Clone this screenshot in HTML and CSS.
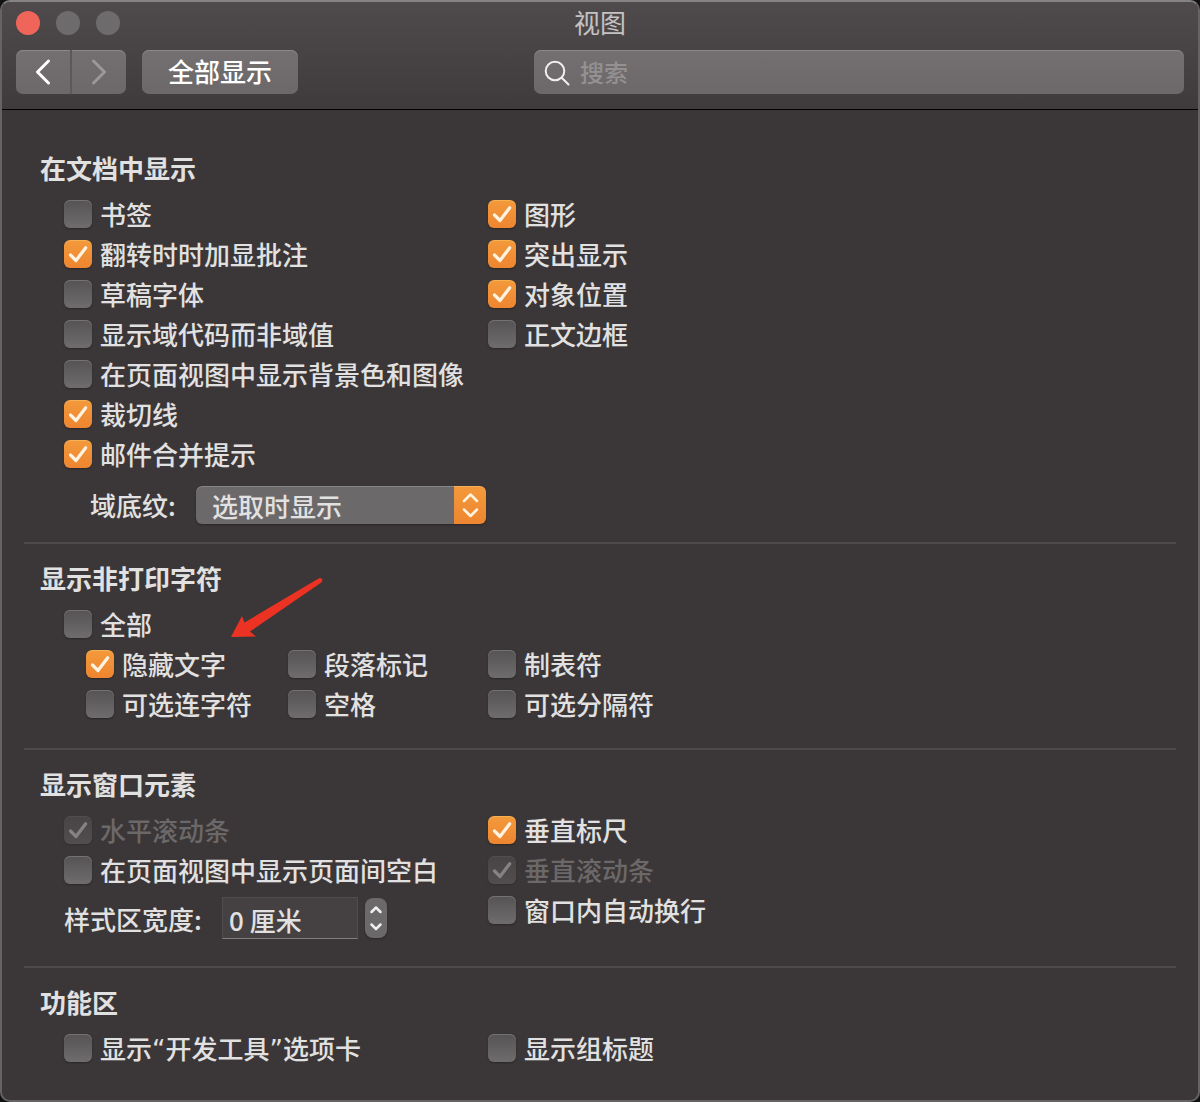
FILE: index.html
```html
<!DOCTYPE html>
<html lang="zh-CN">
<head>
<meta charset="utf-8">
<title>视图</title>
<link rel="stylesheet" href="styles.css">
</head>
<body>
<div class="window">
  <header class="toolbar">
    <div class="titlebar">
      <div class="lights">
        <button class="light light-close" type="button" aria-label="关闭"></button>
        <button class="light" type="button" aria-label="最小化" disabled></button>
        <button class="light" type="button" aria-label="缩放" disabled></button>
      </div>
      <h1 class="title">视图</h1>
    </div>
    <div class="tools">
      <div class="nav">
        <button class="nav-button" type="button" aria-label="后退">
          <svg width="54" height="44" viewBox="0 0 54 44"><path d="M32.500 11 L21.500 22 L32.500 33" /></svg>
        </button>
        <button class="nav-button" type="button" aria-label="前进" disabled>
          <svg width="54" height="44" viewBox="0 0 54 44"><path d="M21.500 11 L32.500 22 L21.500 33" /></svg>
        </button>
      </div>
      <button class="show-all" type="button">全部显示</button>
      <label class="search">
        <svg width="28" height="28" viewBox="0 0 28 28"><circle cx="11" cy="13" r="9.300" /><path d="M17.700 19.700 L24.500 26.500" /></svg>
        <input type="search" placeholder="搜索" aria-label="搜索">
      </label>
    </div>
  </header>

  <main class="panel">
    <section class="group">
      <h2>在文档中显示</h2>
      <div class="columns">
        <div>
          <label class="check"><input type="checkbox"><span>书签</span></label>
          <label class="check"><input type="checkbox" checked><span>翻转时时加显批注</span></label>
          <label class="check"><input type="checkbox"><span>草稿字体</span></label>
          <label class="check"><input type="checkbox"><span>显示域代码而非域值</span></label>
          <label class="check"><input type="checkbox"><span>在页面视图中显示背景色和图像</span></label>
          <label class="check"><input type="checkbox" checked><span>裁切线</span></label>
          <label class="check"><input type="checkbox" checked><span>邮件合并提示</span></label>
        </div>
        <div>
          <label class="check"><input type="checkbox" checked><span>图形</span></label>
          <label class="check"><input type="checkbox" checked><span>突出显示</span></label>
          <label class="check"><input type="checkbox" checked><span>对象位置</span></label>
          <label class="check"><input type="checkbox"><span>正文边框</span></label>
        </div>
      </div>
      <div class="shading">
        <label for="shading">域底纹:</label>
        <select id="shading"><option>选取时显示</option></select>
      </div>
    </section>

    <section class="group">
      <h2>显示非打印字符</h2>
      <div class="indent">
        <label class="check"><input type="checkbox"><span>全部</span></label>
        <div class="marks">
          <label class="check"><input type="checkbox" checked><span>隐藏文字</span></label>
          <label class="check"><input type="checkbox"><span>段落标记</span></label>
          <label class="check"><input type="checkbox"><span>制表符</span></label>
          <label class="check"><input type="checkbox"><span>可选连字符</span></label>
          <label class="check"><input type="checkbox"><span>空格</span></label>
          <label class="check"><input type="checkbox"><span>可选分隔符</span></label>
        </div>
      </div>
      <svg class="arrow" width="94" height="62" viewBox="0 0 94 62" aria-hidden="true"><path d="M1 60 L12 39 L14.500 45.500 L89 1.300 Q91.500 0.300 92.300 2.500 Q92.600 4.600 91 5.700 L20 54.500 L26 59.500 Z" /></svg>
    </section>

    <section class="group">
      <h2>显示窗口元素</h2>
      <div class="columns">
        <div>
          <label class="check"><input type="checkbox" checked disabled><span>水平滚动条</span></label>
          <label class="check"><input type="checkbox"><span>在页面视图中显示页面间空白</span></label>
          <div class="measure">
            <label for="area">样式区宽度:</label>
            <input id="area" type="text" value="0 厘米">
            <div class="stepper">
              <button type="button" aria-label="增加"><svg width="22" height="20" viewBox="0 0 22 20"><path d="M6.500 14 L11 9.500 L15.500 14" /></svg></button>
              <button type="button" aria-label="减少"><svg width="22" height="20" viewBox="0 0 22 20"><path d="M6.500 6.500 L11 11 L15.500 6.500" /></svg></button>
            </div>
          </div>
        </div>
        <div>
          <label class="check"><input type="checkbox" checked><span>垂直标尺</span></label>
          <label class="check"><input type="checkbox" checked disabled><span>垂直滚动条</span></label>
          <label class="check"><input type="checkbox"><span>窗口内自动换行</span></label>
        </div>
      </div>
    </section>

    <section class="group">
      <h2>功能区</h2>
      <div class="columns">
        <label class="check"><input type="checkbox"><span>显示<span class="quote">“</span>开发工具<span class="quote">”</span>选项卡</span></label>
        <label class="check"><input type="checkbox"><span>显示组标题</span></label>
      </div>
    </section>
  </main>
</div>
</body>
</html>
```
FILE: styles.css
```css
* {
  box-sizing: border-box;
}

body {
  margin: 0;
  background: #111;
  color: #e2e1e1;
  font: 500 26px/40px "Noto Sans CJK SC", sans-serif;
}

button,
input,
select {
  margin: 0;
  padding: 0;
  border: 0;
  font: inherit;
  color: inherit;
}

svg {
  display: block;
  fill: none;
  stroke: currentColor;
  stroke-linecap: round;
  stroke-linejoin: round;
}

.window {
  min-height: 100vh;
  border: 2px solid #666364;
  border-top-color: #858283;
  border-radius: 10px;
  background: #3b3637;
  overflow: hidden;
}

/* Title bar and tools */
.toolbar {
  padding: 0 14px 15px;
  border-bottom: 1px solid #000;
  background: linear-gradient(#4f4b4c, #3f3b3c);
}

.titlebar {
  display: grid;
  grid-template-columns: 1fr auto 1fr;
  align-items: center;
  height: 40px;
  margin-bottom: 8px;
}

.lights {
  display: flex;
  gap: 16px;
}

.light {
  width: 24px;
  height: 24px;
  border-radius: 50%;
  background: #6e6b6c;
}

.light-close {
  background: #ef6559;
}

.title {
  margin: 0;
  padding-bottom: 2px;
  color: #c5c2c3;
  font-size: 26px;
  font-weight: 400;
}

.tools {
  display: flex;
  height: 44px;
}

.nav,
.show-all,
.search {
  border-radius: 7px;
  background: linear-gradient(#747071, #6c6869);
  box-shadow: inset 0 1px #8b8889;
}

.nav {
  display: flex;
  width: 110px;
}

.nav-button {
  flex: 1;
  background: none;
  color: #fff;
  stroke-width: 3;
}

.nav-button + .nav-button {
  border-left: 2px solid #5c595a;
  color: #9b9899;
}

.show-all {
  width: 156px;
  margin-left: 16px;
  padding-bottom: 2px;
  color: #fff;
}

.search {
  display: flex;
  flex: 1;
  align-items: center;
  gap: 8px;
  margin-left: 236px;
  padding: 0 10px;
  color: #f0efef;
  stroke-width: 2;
}

.search input {
  flex: 1;
  min-width: 0;
  background: none;
  outline: 0;
  font-size: 24px;
}

.search input::placeholder {
  color: #949192;
}

/* Settings groups */
.panel {
  padding: 24px 22px;
}

.group {
  position: relative;
  padding: 16px 16px 24px;
}

.group + .group {
  border-top: 2px solid #4e4a4b;
}

.group:first-child {
  padding-bottom: 18px;
}

.group:last-child {
  padding-bottom: 0;
}

h2 {
  margin: 0 0 8px;
  font-size: 26px;
  font-weight: 700;
  line-height: 36px;
}

.columns {
  display: grid;
  grid-template-columns: 424px 1fr;
  padding-left: 24px;
}

.indent {
  padding-left: 24px;
}

.marks {
  display: grid;
  grid-template-columns: 202px 200px 1fr;
  padding-left: 22px;
}

.check {
  display: flex;
  align-items: center;
  gap: 8px;
  height: 40px;
  white-space: nowrap;
}

.check input {
  appearance: none;
  flex: none;
  width: 28px;
  height: 28px;
  border-radius: 6px;
  background: linear-gradient(#565354, #6f6c6d);
  box-shadow: inset 0 1px #757273, 0 1px 2px #2b2728;
}

.check input:checked {
  background:
    url("data:image/svg+xml,%3Csvg xmlns='http://www.w3.org/2000/svg' viewBox='0 0 28 28'%3E%3Cpath d='M6.500 15 L12 20.500 L21.700 7.800' fill='none' stroke='%23fff3e2' stroke-width='3.200' stroke-linecap='round' stroke-linejoin='round'/%3E%3C/svg%3E"),
    linear-gradient(#f39a3b, #ee8530);
  box-shadow: inset 0 1px #f7b254, 0 1px 2px #2b2728;
}

.check input:disabled {
  background:
    url("data:image/svg+xml,%3Csvg xmlns='http://www.w3.org/2000/svg' viewBox='0 0 28 28'%3E%3Cpath d='M6.500 15 L12 20.500 L21.700 7.800' fill='none' stroke='%23858283' stroke-width='3.200' stroke-linecap='round' stroke-linejoin='round'/%3E%3C/svg%3E"),
    linear-gradient(#484445, #524e4f);
  box-shadow: inset 0 1px #524e4f, 0 1px 2px #332f30;
}

.check input:disabled + span {
  color: #6b6869;
}

.quote {
  font-family: "DejaVu Sans", sans-serif;
  line-height: 1;
}

.shading {
  display: flex;
  align-items: center;
  gap: 16px;
  margin-top: 12px;
  padding-left: 50px;
}

.shading label {
  width: 90px;
  line-height: 38px;
}

.shading select {
  appearance: none;
  width: 290px;
  height: 38px;
  padding: 0 48px 0 16px;
  border-radius: 6px;
  background:
    url("data:image/svg+xml,%3Csvg xmlns='http://www.w3.org/2000/svg' viewBox='0 0 32 38'%3E%3Cpath d='M10 15 L16.500 8.500 L23 15 M10 23.500 L16.500 30 L23 23.500' fill='none' stroke='%23fff3e2' stroke-width='2.500' stroke-linecap='round' stroke-linejoin='round'/%3E%3C/svg%3E") right / 32px 38px no-repeat,
    linear-gradient(#f39a3b, #ee8530) right / 32px 38px no-repeat,
    #6b696a;
  box-shadow: inset 0 1px #ffffff33, 0 1px 2px #2b2728;
}

.arrow {
  position: absolute;
  top: 33px;
  left: 206px;
  fill: #ec3323;
  stroke: none;
}

.measure {
  display: flex;
  align-items: center;
  height: 42px;
  margin: 7px 0 3px;
}

.measure label {
  width: 158px;
  padding-top: 2px;
}

.measure input {
  width: 136px;
  height: 42px;
  padding: 2px 6px 0;
  border: 1px solid #504c4d;
  border-bottom-color: #827f80;
  background: #454142;
}

.stepper {
  display: flex;
  flex-direction: column;
  width: 22px;
  height: 40px;
  margin-left: 7px;
  border-radius: 8px;
  background: #6b696a;
  box-shadow: 0 1px 2px #2b2728;
}

.stepper button {
  flex: 1;
  background: none;
  color: #f0efef;
  stroke-width: 2.500;
}
```
